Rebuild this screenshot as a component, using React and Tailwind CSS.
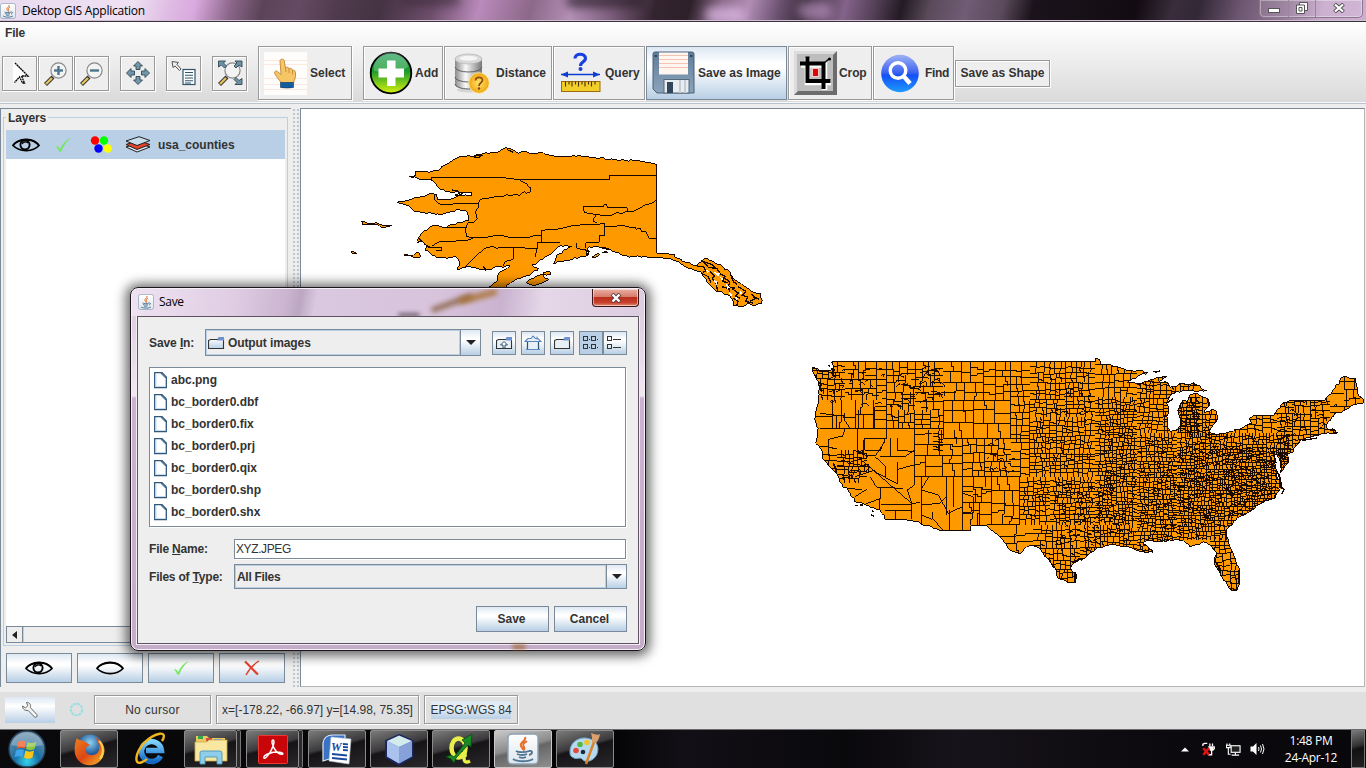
import React from "react";

/* ---------- map geometry (three map units per pixel) ---------- */

function makeRandom(seed) {
  let s = seed;
  return () => {
    s = (s * 1664525 + 1013904223) % 4294967296;
    return s / 4294967296;
  };
}

const snap = (v) => Math.round(v / 3) * 3 + 1.5;

// Turns a coarse outline into a ragged coast; axis-aligned borders stay straight.
function coast(text, seed, amp = 4) {
  const rand = makeRandom(seed);
  const pts = text.trim().split(/\s+/).map((p) => p.split(",").map(Number));
  let d = "";
  pts.forEach(([x, y], i) => {
    const [nx, ny] = pts[(i + 1) % pts.length];
    d += (i ? "L" : "M") + x + " " + y;
    const len = Math.hypot(nx - x, ny - y);
    if (nx !== x && ny !== y && len > 14) {
      const n = Math.floor(len / 8);
      for (let k = 1; k < n; k++) {
        const t = k / n;
        d += `L${(x + (nx - x) * t + (rand() - 0.5) * amp * 2).toFixed(1)} ${(y + (ny - y) * t + (rand() - 0.5) * amp * 2).toFixed(1)}`;
      }
    }
  });
  return d + "Z";
}

function subdivide(x, y, w, h, sizeAt, rand, out) {
  const s = sizeAt(x + w / 2, y + h / 2);
  if (w < s * 1.5 && h < s * 1.4) return;
  const r = 0.36 + rand() * 0.28;
  const jog = (rand() < 0.45 ? 3 : 0) * (rand() < 0.5 ? -1 : 1) * (s > 22 ? 2 : 1);
  if (w > h * 1.1) {
    const p = x + w * r;
    out.push(`M${snap(p)} ${snap(y)}V${snap(y + h / 2)}H${snap(p) + jog}V${snap(y + h)}`);
    subdivide(x, y, p - x, h, sizeAt, rand, out);
    subdivide(p, y, x + w - p, h, sizeAt, rand, out);
  } else {
    const p = y + h * r;
    out.push(`M${snap(x)} ${snap(p)}H${snap(x + w / 2)}V${snap(p) + jog}H${snap(x + w)}`);
    subdivide(x, y, w, p - y, sizeAt, rand, out);
    subdivide(x, p, w, y + h - p, sizeAt, rand, out);
  }
}

function countyLines() {
  const rand = makeRandom(77);
  const out = [];
  const box = (x1, y1, x2, y2, s) =>
    subdivide(x1, y1, x2 - x1, y2 - y1, typeof s === "function" ? s : () => s, rand, out);
  box(30, 35, 135, 150, 17);
  box(135, 35, 260, 150, 23);
  box(45, 150, 260, 235, 36);
  box(260, 35, 430, 180, 23);
  box(260, 180, 430, 235, 19);
  box(430, 35, 632, 152, 27);
  box(430, 152, 632, 265, 38);
  box(60, 270, 110, 380, 18);
  box(110, 300, 200, 400, 15);
  box(400, 235, 430, 310, 14);
  box(343, 240, 487, 380, 34);
  box(487, 265, 632, 380, 22);
  box(487, 380, 660, 525, 30);
  box(632, 35, 690, 380, 21);
  box(690, 35, 885, 200, 16.5);
  box(690, 200, 885, 380, 13.5);
  box(660, 380, 750, 525, 14);
  box(600, 525, 700, 620, 36);
  box(700, 525, 840, 700, 16);
  box(750, 380, 885, 525, 12.5);
  box(840, 525, 1010, 650, 13.5);
  box(885, 20, 1010, 140, 21);
  box(885, 140, 1010, 525, 11.5);
  box(1010, 60, 1200, 250, 14);
  box(1010, 250, 1130, 610, 11.5);
  box(1130, 140, 1290, 260, 14);
  box(1130, 250, 1470, 570, (x, y) => (y > 300 && y < 500 ? 10 : 11.5));
  box(1230, 560, 1330, 730, 16);
  box(1290, 190, 1430, 250, 18);
  box(1430, 140, 1590, 330, (x, y) => (y > 250 ? 13 : 17));
  box(1590, 70, 1700, 260, 30);
  // short diagonal ridges through the Appalachians and the mountain states
  const slants = [
    [1080, 290, 340, 250, 330, 7],
    [1260, 290, 160, 150, 70, 8],
    [890, 300, 250, 260, 150, 7],
    [80, 60, 170, 110, 26, 12],
    [280, 50, 150, 130, 34, 15],
    [110, 300, 90, 90, 12, 16],
    [550, 270, 80, 100, 14, 12],
    [760, 400, 140, 200, 90, 7],
    [760, 100, 110, 110, 20, 9],
    [1420, 160, 200, 120, 40, 10],
  ];
  slants.forEach(([x, y, w, h, n, l]) => {
    for (let i = 0; i < n; i++) {
      const a = x + rand() * w;
      const b = y + rand() * h;
      out.push(`M${a.toFixed(0)} ${b.toFixed(0)}l${(l * (0.5 + rand())).toFixed(0)} ${(l * (rand() - 0.75)).toFixed(0)}l${(l * (rand() - 0.3)).toFixed(0)} ${(l * rand()).toFixed(0)}`);
    }
  });
  return out.join("");
}

const COUNTIES = countyLines();

const USA = coast(
  `37,52 60,62 90,62 102,56 95,35 885,35 887,25 899,28 902,42 940,48 970,55 980,62 1045,67 1015,78 982,97
  1000,97 1025,100 1055,88 1080,83 1100,80 1078,95 1105,98 1110,112 1130,108 1140,100 1170,105 1180,98 1200,108
  1205,118 1220,122 1185,125 1150,122 1130,125 1108,140 1102,155 1104,180 1100,200 1105,235 1112,245 1130,240
  1142,225 1138,200 1133,180 1140,165 1150,150 1162,155 1170,135 1185,130 1205,140 1225,148 1230,165 1215,180
  1212,188 1235,178 1248,182 1253,205 1245,220 1230,240 1225,248 1255,253 1290,245 1325,235 1355,220 1348,205
  1360,198 1420,198 1432,178 1450,158 1470,151 1575,151 1605,115 1630,80 1648,85 1668,85 1672,130 1692,150
  1690,160 1670,162 1640,178 1605,190 1585,215 1580,235 1605,240 1610,250 1585,248 1550,256 1505,268 1490,285
  1480,305 1460,315 1466,330 1448,362 1440,370 1443,340 1430,318 1424,340 1428,375 1440,395 1444,415 1430,430
  1425,445 1400,450 1375,465 1340,490 1300,515 1280,540 1280,560 1295,600 1305,625 1320,660 1320,698 1312,721
  1292,721 1270,690 1255,660 1242,640 1250,610 1235,590 1210,575 1185,585 1170,590 1150,572 1125,568 1090,573
  1045,572 1030,580 1055,600 1060,607 1020,605 990,592 930,585 890,595 855,625 830,635 812,652 822,670 827,698 805,698
  775,685 765,655 735,620 720,595 700,587 680,590 658,612 625,595 610,570 580,545 562,528 512,528 512,542
  430,542 320,508 255,508 240,480 190,460 165,455 150,430 120,395 105,365 68,325 62,295 47,280 55,235 45,210
  55,150 58,115 50,90 37,65`,
  11,
  3.2
);

const ALASKA = coast(
  `208,110 228,106 225,95 260,95 295,93 315,75 348,55 385,47 400,50 430,40 470,38 498,23 520,30 535,40 555,35
  575,42 610,38 625,45 660,50 690,50 720,47 760,52 830,60 900,63 935,70 950,73 950,340 1003,342 1005,350
  1040,367 1065,378 1100,355 1130,372 1165,390 1185,420 1215,440 1235,455 1262,462 1265,490 1245,498 1225,490
  1210,500 1180,495 1175,475 1145,455 1130,455 1100,425 1082,395 1045,385 1015,365 990,355 950,353 860,348
  820,335 800,325 765,318 742,325 738,348 680,360 640,372 650,345 680,328 695,318 662,316 635,340 615,350
  595,365 575,375 595,385 575,400 540,415 515,425 490,445 435,450 470,425 475,400 510,378 480,380 440,390
  385,380 350,388 360,372 345,348 320,355 290,352 255,330 262,316 232,302 245,280 275,258 310,262 350,250
  385,242 382,215 350,208 310,222 225,215 210,200 172,187 200,180 250,170 275,160 290,165 292,178 330,178
  365,166 395,165 395,158 360,158 300,148 285,130 265,118 240,118`,
  5,
  3
);

const ALASKA_LINES =
  "M274 118H275V112H487L505 115L540 119H808V106H950M540 119L550 128L560 130L563 137L573 145L570 156L560 160L552 155L538 166L525 163L510 168L500 163L490 170L465 170L440 176L430 174L420 180L415 190L300 193L285 180L283 166M415 190L416 200L406 215L412 236L400 247L385 247L376 265L380 290L400 293L430 294L460 288L490 287L510 293L560 294L580 288L604 285M604 308V273L615 270H640L660 266L700 256L780 252L794 250V287H778V307H737M592 308H660M592 308V325L480 322L470 326L460 320L440 322L410 345L370 385M592 325L585 350M520 323V358L495 365L490 378M794 260L850 257L870 262L885 262L888 268L900 264L905 276L918 276L928 295H950M950 180L935 190L915 195L900 205L880 214L862 214M730 200L790 200L792 194L800 195L802 203L862 203L862 214L845 220L830 218L815 226L800 228L760 222L733 218L730 200M768 226L762 235L758 244L770 248M275 318L290 310L300 305L375 302L398 296M380 262H340L310 262M708 310L710 325L735 330M737 308V325";

const ALASKA_ISLES = [
  "65,243 88,252 108,248 130,256 155,256 128,264 112,252 85,253 68,254",
  "32,335 48,338 52,341 36,339",
  "192,345 220,346 234,337 244,348 228,354 212,347",
  "560,425 590,408 610,402 612,412 628,418 605,430 580,438 562,430",
  "608,398 628,394 634,402 618,406",
  "755,352 775,340 778,345 760,354",
  "785,338 800,334 802,339",
].map((t, i) => coast(t, 20 + i, 1.5));

const WEST_LINES =
  "M60 235H430M260 35V265M172 235V320L335 460M343 235V405M343 380H660M487 265V545M430 152V265M430 152H632M430 265H690M632 35V265M690 152V380M364 380V525M660 380V525H562M195 265H260M195 265V300L240 303L255 268M195 318H225L255 275M240 320H315L343 300M271 265V318M292 265V300L343 305M225 320L258 350V382M292 335V402M292 358L343 345M343 405L322 420L335 460L360 458M120 415L185 418M210 380L230 412L310 415M165 440L200 418M190 465L242 445V415M240 445V480M242 465H335V508M286 482V508M255 482H335M135 235L128 258L85 268M172 320L225 365L292 402M190 325V270M364 420L415 435L445 490L487 470M440 380V495M462 380V470M385 382L364 418M397 485V508L364 495M448 480V542M364 465L420 460L440 440M160 300L205 320M150 340L210 350M165 380L225 360M343 255L395 250M430 265V235M60 190L110 196V235M135 190V212L150 235M177 180V235M224 170V235M224 170H260M400 508L430 542M540 478V528M487 430L520 440V490H487";

function MapCanvas() {
  return (
    <svg width="1063" height="576" viewBox="301 109 1063 576" shapeRendering="crispEdges" className="block shrink-0">
      <defs>
        <clipPath id="land">
          <path d={USA} />
        </clipPath>
      </defs>
      <g transform="translate(340 140) scale(.33333)" stroke="#160800" strokeWidth="3" fill="#ff9900">
        <path d={ALASKA} />
        {ALASKA_ISLES.map((d, i) => (
          <path key={i} d={d} />
        ))}
        <path d={ALASKA_LINES} fill="none" />
        <path
          d="M400 50l10 -6 14 3 -8 6zM335 150l18 2 5 12 12 -4 M345 165l30 2 M235 295l8 6 -10 8M262 320l18 3 25 0 0 8 -18 0M430 378l8 14 M735 330l12 4 -5 14M780 322l26 6M500 28l20 10"
          fill="none"
          strokeWidth="4"
        />
        <path
          d="M1070 378l20 2 8 12 -10 6M1090 365l25 8 12 12 -22 -3zM1085 400l20 10 8 18M1110 395l14 12 -8 10 18 14M1130 385l12 18 14 6 -8 14 14 6M1128 430l6 26M1150 412l20 14 -6 14 22 5M1170 400l10 25 12 8M1145 440l22 6 3 15M1175 445l20 14 -8 10 14 6M1195 440l22 14 -10 12M1180 475l14 8 -4 14M1205 465l18 6 -6 14 22 4M1235 462l10 14 -14 8M1240 470l18 8"
          fill="none"
          strokeWidth="4"
        />
        <path d="M1122 396l18 4 -6 10zM1120 420l10 4 0 12zM1158 432l14 10 -10 4zM1165 455l14 10 -6 6zM1200 452l8 8 -8 3zM1210 475l-8 12zM1098 388l10 6 -6 6zM1140 412l10 3 -4 8zM1185 470l10 4 -6 6z" fill="#fff" stroke="none" />
      </g>
      <g transform="translate(800 350) scale(.33333)">
        <path d={USA} fill="#ff9900" />
        <g clipPath="url(#land)" fill="none" stroke="#1c0b00" strokeWidth="3">
          <path d={COUNTIES} />
          <path d={WEST_LINES} />
        </g>
        <path d={USA} fill="none" stroke="#160800" strokeWidth="3" />
        <path d="M165 467h10M180 465h8M215 482l6 4M214 494l8 5M1060 65h10M1066 68l14 -6M1098 160l22 -14M1505 272l45 -8M1596 236l8 14 8 -4M85 45l6 4M1424 318l4 20M1434 300l8 24M1438 405l14 14 -8 14" fill="none" stroke="#160800" strokeWidth="4" />
        <path d="M94 55l8 6 -6 8 8 12M55 98l8 4 -4 12 8 10M825 665l4 22M818 640l22 -14 8 4M100 340l10 25M1425 360l12 14 6 30M1150 370l12 4M1250 640l8 14 4 14" fill="none" stroke="#160800" strokeWidth="6" />
        <path d="M1428 312l8 14 -4 26 -5 8 3 -24 -5 -16zM1436 412l10 10 -8 12 -3 -6 5 -8z" fill="#fff" stroke="none" />
      </g>
    </svg>
  );
}

/* ---------- icons ---------- */

const JavaCup = ({ size }) => (
  <svg width={size} height={size} viewBox="0 0 32 32" className="shrink-0">
    <defs>
      <linearGradient id="jc" x1="0" y1="0" x2="0" y2="1">
        <stop offset="0" stopColor="#fff" />
        <stop offset="1" stopColor="#dfe6ec" />
      </linearGradient>
    </defs>
    <rect x="1" y="1" width="30" height="30" rx="4" fill="url(#jc)" stroke="#8aa0b2" strokeWidth="1.4" />
    <path d="M18 4c2 4-6 5-4 9 1 2 2 2 2 4M20 8c-3 2-5 3-3 6 1 2 0 3-1 3" fill="none" stroke="#e8702a" strokeWidth="2" />
    <path d="M9 18c2 1.500 10 1.500 13 0M10 21c3 1.300 8 1.300 10 0M12 24c2 1 5 1 7 0M22 18c4-1 4 3 0 4M6 26c4 3 16 3 20 0" fill="none" stroke="#4f7896" strokeWidth="1.900" />
  </svg>
);

const Eye = ({ open = true }) => (
  <svg width="28" height="16" viewBox="0 0 28 16">
    <path d="M1 8.500C6 2 20 0 27 8.500C21 15 8 15.500 1 8.500Z" fill="none" stroke="#000" strokeWidth="1.700" />
    <path d="M1 8C7 1 20-.5 27 8" fill="none" stroke="#000" strokeWidth="1.500" />
    {open && <circle cx="13" cy="7.800" r="4.600" fill="none" stroke="#000" strokeWidth="1.900" />}
    {open && <path d="M10 7c1-2 4-3 6-1" fill="none" stroke="#000" strokeWidth="1.300" />}
  </svg>
);

const Check = () => (
  <svg width="18" height="16" viewBox="0 0 18 16">
    <path d="M2 9.500C4 9 5 10 6 13C8 8 11 4 16 1.500C12 5 9 9 7 14.500L5.500 14.500C4.500 12 3.500 10.500 2 9.500Z" fill="#6bea4e" stroke="#6bea4e" strokeWidth=".3" />
  </svg>
);

const Cross = () => (
  <svg width="18" height="16" viewBox="0 0 18 16">
    <path d="M2 1.500C6 5 10 10 15 14.500" fill="none" stroke="#e2412b" strokeWidth="2.200" />
    <path d="M16 1C11 4 6 9 3 15" fill="none" stroke="#e2412b" strokeWidth="1.400" />
  </svg>
);

const Dots = () => (
  <svg width="22" height="18" viewBox="0 0 22 18">
    <circle cx="5" cy="4.500" r="4.200" fill="#f00" />
    <circle cx="14" cy="4.500" r="4.200" fill="#0f0" />
    <circle cx="8.500" cy="12.500" r="4.200" fill="#00f" />
    <circle cx="17.700" cy="12.500" r="4.200" fill="#ff0" />
  </svg>
);

const Stack = () => (
  <svg width="26" height="17" viewBox="0 0 26 17">
    <g stroke="#222" strokeWidth="1" strokeLinejoin="round">
      <path d="M1 11L13 7L25 11L12 16Z" fill="#dfeaf4" />
      <path d="M1 8.500L13 4.500L25 8.500L12 13.500Z" fill="#e0432c" />
      <path d="M1 5L14 .7L25 4.500L12 9.500Z" fill="#c9dcec" />
    </g>
  </svg>
);

const Magnifier = ({ minus, arrows }) => (
  <svg width="30" height="30" viewBox="0 0 30 30">
    <path d="M4.500 26.500L12 19" stroke="#333" strokeWidth="4.200" />
    <path d="M5 26L11 20" stroke="#e4c15a" strokeWidth="2.400" />
    <circle cx="17.500" cy="12.500" r="7.600" fill="#f3f3f3" stroke="#888" strokeWidth="1.200" />
    {!arrows && <path d="M13 12.500H22" stroke="#4d7489" strokeWidth="2.400" />}
    {!arrows && !minus && <path d="M17.500 8V17" stroke="#4d7489" strokeWidth="2.400" />}
    {arrows && (
      <g fill="#6f93a5" stroke="#2f4756" strokeWidth=".9">
        <path d="M3.500 3h7l-2 2 3 3-2 2-3-3-3 2z" />
        <path d="M27 3h-7l2 2-3 3 2 2 3-3 3 2z" />
        <path d="M27 26.500h-7l2-2-3-3 2-2 3 3 3-2z" />
      </g>
    )}
  </svg>
);

const Pointer = () => (
  <svg width="30" height="30" viewBox="0 0 30 30">
    <path d="M8 4V24H9L13 19L16 25L19 24L17 18L23 18Z" fill="#fff" />
    <path d="M10 5L23 18H16.500L19.500 25L17.500 25L14.500 19L9.500 24.500" fill="none" stroke="#000" strokeWidth="1.300" strokeDasharray="2 .5" />
  </svg>
);

const Pan = () => (
  <svg width="30" height="30" viewBox="0 0 30 30" fill="#7397a9" stroke="#2f4756" strokeWidth=".9">
    <path d="M15 3.500l4.500 4.500H17v3.500h-4V8h-2.500zM15 26.500l4.500-4.500H17v-3.500h-4V22h-2.500zM3.500 15L8 10.500V13h3.500v4H8v2.500zM26.500 15L22 10.500V13h-3.500v4H22v2.500z" />
  </svg>
);

const Info = () => (
  <svg width="30" height="30" viewBox="0 0 30 30">
    <path d="M3 3.500L9.500 4.500L7.800 6.200L12 11L10.500 12.500L6 8L4 9.500Z" fill="#eee" stroke="#555" />
    <rect x="14" y="11.500" width="12" height="15" fill="#fff" stroke="#31556c" strokeWidth="1.200" />
    <path d="M16 14.500h8M16 17.300h8M16 20h8M16 22.700h8M16 25h6" stroke="#31556c" strokeWidth="1.100" />
  </svg>
);

const Hand = () => (
  <svg width="43" height="43" viewBox="0 0 43 43">
    <path d="M0 0H43V43H0Z" fill="#fffdfb" />
    <path d="M0 8.500H43M0 12.500H43M0 26.500H43M0 32.500H43M0 37.500H43" stroke="#fbe9e0" />
    <path d="M16 9C16 6.500 20 6.500 20.300 9L21.500 16C22 14.500 25 15 25 17C26 15.500 28.500 16.500 28.500 18.500C30 17.500 31.500 19 31.500 21C32 26 30.500 27 29.500 31H17C16 28 13 26 11 22C9.500 19.500 12 18 14 20L17 22.500Z" fill="#f6c566" stroke="#b97b25" strokeWidth=".8" />
    <path d="M21.500 16l.5 4M25 17v4M28.500 18.500v4" stroke="#b97b25" strokeWidth=".7" />
    <path d="M16.500 30.500H29.500V35.500Q23 36.500 16.500 35.500Z" fill="#145c9c" stroke="#0b3766" strokeWidth=".6" />
  </svg>
);

const Plus = () => (
  <svg width="44" height="44" viewBox="0 0 44 44">
    <defs>
      <linearGradient id="pg" x1="0" y1="0" x2="0" y2="1">
        <stop offset="0" stopColor="#37a66b" />
        <stop offset=".45" stopColor="#199a2c" />
        <stop offset="1" stopColor="#d8f20c" />
      </linearGradient>
    </defs>
    <circle cx="22" cy="22" r="20.300" fill="url(#pg)" stroke="#000" strokeWidth="1.800" />
    <path d="M5 20A17 17 0 0 1 39 16Q28 24 5 20Z" fill="#fff" opacity=".22" />
    <path d="M18 9.500h8.500v8H35v9h-8.500v8.500H18V26.500H9.500v-9H18z" fill="#fff" />
  </svg>
);

const Database = () => (
  <svg width="44" height="44" viewBox="0 0 44 44">
    <defs>
      <linearGradient id="dg" x1="0" x2="1">
        <stop offset="0" stopColor="#8a8a8a" />
        <stop offset=".4" stopColor="#fafafa" />
        <stop offset="1" stopColor="#777" />
      </linearGradient>
      <radialGradient id="qg">
        <stop offset="0" stopColor="#ffe36a" />
        <stop offset="1" stopColor="#f0a612" />
      </radialGradient>
    </defs>
    <ellipse cx="20" cy="39" rx="13" ry="2.500" fill="#bbb" opacity=".5" />
    {[28, 21, 11].map((y) => (
      <g key={y}>
        <path d={`M5 ${y - 3}V${y + 5}A13.500 5 0 0 0 32 ${y + 5}V${y - 3}Z`} fill="url(#dg)" />
        <path d={`M5 ${y + 5}A13.500 5 0 0 0 32 ${y + 5}`} fill="none" stroke="#555" strokeWidth=".9" />
      </g>
    ))}
    <ellipse cx="18.500" cy="8" rx="13.500" ry="5" fill="#d9d9d9" stroke="#aaa" strokeWidth=".6" />
    <ellipse cx="18.500" cy="7.300" rx="9" ry="2.500" fill="#f5f5f5" />
    <circle cx="29" cy="32" r="10.300" fill="url(#qg)" stroke="#fff0a8" strokeWidth=".8" />
    <path d="M25.500 29.500C25.500 25.500 32.500 25.500 32.500 29C32.500 32 29 31.500 29 35" fill="none" stroke="#8b4a10" strokeWidth="1.700" />
    <circle cx="29" cy="37.500" r="1.200" fill="#8b4a10" />
  </svg>
);

const Ruler = () => (
  <svg width="44" height="44" viewBox="0 0 44 44">
    <path d="M16 7.500C16 1.800 26.500 1.800 26.500 7.500C26.500 11 21.500 10.500 21.500 15" fill="none" stroke="#1a3fe0" strokeWidth="3.200" />
    <circle cx="21.500" cy="18" r="2" fill="#1a3fe0" />
    <path d="M2 23.500H41" stroke="#0e3fd0" strokeWidth="1.500" />
    <path d="M2 23.500l7-3v6zM41 23.500l-7-3v6z" fill="#0e3fd0" />
    <rect x="2.500" y="30.500" width="38.500" height="10" fill="#f2ce2b" stroke="#a06a10" />
    <path d="M6.500 30.500v5M10 30.500v3M13 30.500v5M16.500 30.500v3M19.500 30.500v5M23 30.500v3M26 30.500v5M29.500 30.500v3M32.500 30.500v5M36 30.500v3" stroke="#4b3406" strokeWidth="1.100" />
  </svg>
);

const Floppy = () => (
  <svg width="44" height="44" viewBox="0 0 44 44">
    <defs>
      <linearGradient id="fg" x1="0" y1="0" x2="0" y2="1">
        <stop offset="0" stopColor="#5f7c9a" />
        <stop offset="1" stopColor="#8ba4ba" />
      </linearGradient>
    </defs>
    <path d="M1 3Q1 1 3 1H40Q42 1 42 3V42H5L1 38Z" fill="url(#fg)" stroke="#4a6078" />
    <rect x="7" y="1.500" width="29" height="22" fill="#fff6f2" />
    <path d="M7 4.500H36M7 8.500H36M7 12.500H36M7 16.500H36" stroke="#f4c3b4" strokeWidth="1.200" />
    <path d="M2.500 5h2.500M38 5h2.500" stroke="#243444" strokeWidth="1.600" />
    <rect x="12" y="28.500" width="25" height="13.500" fill="#e9edf0" stroke="#54687c" />
    <rect x="15" y="31" width="6" height="11" fill="#34475a" />
    <path d="M28 29v13M33 29v13" stroke="#c3ccd4" strokeWidth="2" />
  </svg>
);

const Crop = () => (
  <svg width="43" height="44" viewBox="0 0 43 44">
    <rect width="43" height="44" fill="#dcdcdc" />
    <path d="M0 44H43V0L39 4V40H4Z" fill="#6d6d6d" />
    <rect x="3" y="3" width="36" height="37" fill="#bdbdbd" />
    <path d="M13.500 7V31.500H37M7 14H30.500V39" fill="none" stroke="#fff" strokeWidth="5.500" />
    <path d="M13.500 5.500V30H36.500M6 12.500H29.500V38" fill="none" stroke="#000" strokeWidth="4" />
    <path d="M30 12L35.500 7.500" stroke="#000" strokeWidth="1.200" />
    <circle cx="35.500" cy="8" r="1.600" />
    <rect x="17.500" y="17" width="7.500" height="9" fill="#f4caca" />
    <rect x="19" y="18" width="5" height="7" fill="#d80808" />
  </svg>
);

const Find = () => (
  <svg width="40" height="44" viewBox="0 0 40 44">
    <defs>
      <linearGradient id="sg" x1="0" y1="0" x2="0" y2="1">
        <stop offset="0" stopColor="#9fb2f5" />
        <stop offset=".48" stopColor="#3a62f0" />
        <stop offset=".55" stopColor="#1450f5" />
        <stop offset="1" stopColor="#1e9bff" />
      </linearGradient>
    </defs>
    <circle cx="20" cy="22.500" r="18.800" fill="url(#sg)" />
    <circle cx="18" cy="19.500" r="7.800" fill="none" stroke="#fff" strokeWidth="3.400" />
    <path d="M23.500 25L30 32.500" stroke="#fff" strokeWidth="4.400" />
  </svg>
);

const Wrench = () => (
  <svg width="18" height="18" viewBox="0 0 18 18">
    <path d="M5.500 1.500C8 1 10.500 3.500 9.300 6.500L15.800 13.500C17 15.500 15 17 13.500 16L7 9.300C4 10 1.500 8 1.500 5L4.500 6.800L6.800 4.800Z" fill="#f4f4f4" stroke="#666" />
  </svg>
);

const FolderIcon = ({ fill = "url(#fold)", children }) => (
  <svg width="17" height="14" viewBox="0 0 17 14">
    <defs>
      <linearGradient id="fold" x1="0" y1="0" x2="0" y2="1">
        <stop offset="0" stopColor="#fff" />
        <stop offset="1" stopColor="#b8cfe5" />
      </linearGradient>
    </defs>
    <path d="M.5 12.500V4.500L2.500 3.500H9.500L11.500 2.500H15.500V12.500Z" fill={fill} stroke="#333" strokeWidth="1.100" />
    <path d="M10.500 1H16V4.500H9.500Z" fill="#6f8fd0" />
    {children}
  </svg>
);

const PageIcon = () => (
  <svg width="13" height="17" viewBox="0 0 13 17">
    <path d="M.7.700H8L12.300 5V15.700H.7Z" fill="#fff" stroke="#30567a" strokeWidth="1.300" />
    <path d="M2 2v12.500h9" fill="none" stroke="#c8dced" />
    <path d="M7 1.500L11.500 6V4.500L8.500 1.500Z" fill="#6c93b5" stroke="#30567a" strokeWidth=".7" />
  </svg>
);

const House = () => (
  <svg width="18" height="16" viewBox="0 0 18 16">
    <path d="M3.500 6.500V14.500H14.500V6.500" fill="#e8eff6" stroke="#31506b" strokeWidth="1.200" />
    <path d="M1 6.500L4 3.500H7L9 1L11.500 3.500H14L17 6.500Z" fill="#e8eff6" stroke="#5687c0" strokeWidth="1.100" />
    <path d="M13 1.500v3" stroke="#5687c0" />
    <path d="M2 14.500h14" stroke="#5687c0" />
  </svg>
);

const GridIcon = () => (
  <svg width="16" height="16" viewBox="0 0 16 16" fill="none" stroke="#333" shapeRendering="crispEdges">
    <path d="M.5 1.500h4v4h-4zM8.500 1.500h4v4h-4zM.5 9.500h4v4h-4zM8.500 9.500h4v4h-4zM6 4.500h1M14 4.500h1M6 12.500h1M14 12.500h1" />
  </svg>
);

const ListIcon = () => (
  <svg width="16" height="16" viewBox="0 0 16 16" fill="none" stroke="#333" shapeRendering="crispEdges">
    <path d="M.5 1.500h4v4h-4zM.5 9.500h4v4h-4zM6 4.500h8M6 12.500h8" />
  </svg>
);

/* ---------- shared widgets ---------- */

function ToolButton({ className, children }) {
  return (
    <div className={"shrink-0 border-r border-b border-white " + className}>
      <div className="flex h-full w-full items-center border border-[#999] bg-[#eee] shadow-[inset_1px_1px_0_#fff]">{children}</div>
    </div>
  );
}

const OCEAN = "border border-[#7a8a99] bg-[linear-gradient(#dde8f3,#fff_32%,#fff_40%,#b8cfe5)]";

function Arrow() {
  return (
    <div className={"flex w-5 items-center justify-center border-y-0 border-r-0 " + OCEAN}>
      <svg width="10" height="5" viewBox="0 0 10 5">
        <path d="M0 0H10L5 5Z" fill="#222" />
      </svg>
    </div>
  );
}

/* ---------- dialog ---------- */

const FILES = ["abc.png", "bc_border0.dbf", "bc_border0.fix", "bc_border0.prj", "bc_border0.qix", "bc_border0.shp", "bc_border0.shx"];

function SaveDialog() {
  return (
    <div className="absolute top-[287px] left-[130px] flex h-[364px] w-[516px] flex-col rounded-[8px] border border-[#1d151d] bg-[linear-gradient(#d8c5db,#f0e8f1_108px,#cbb2d0_110px,#c5adca)] p-px shadow-[0_1px_12px_4px_rgba(0,0,0,.6),inset_0_0_0_1px_#f6eef7]">
      <div className="relative flex h-[27px] shrink-0 items-start justify-between overflow-hidden rounded-t-[6px] bg-[linear-gradient(100deg,#eee2f1,#e0cde4_20%,#cbb5d0_30%,#bca7c2_33%,#d9c8df_36%,#d8c3dc_60%,#c9b3cf_72%,#e5d7e8_80%,#dccde0)]">
        <div className="absolute top-[11px] left-[298px] h-[6px] w-[44px] -rotate-[20deg] rounded-full bg-[#84603f] opacity-80 blur-[2.500px]" />
        <div className="absolute top-[4px] left-[326px] h-[7px] w-[40px] -rotate-[15deg] rounded-full bg-[#a9702f] opacity-80 blur-[2.500px]" />
        <div className="absolute top-[24px] left-[266px] h-[4px] w-[22px] rounded-full bg-[#46353f] opacity-70 blur-[2px]" />
        <div className="relative flex items-center gap-[5px] pt-[5px] pl-[6px]">
          <JavaCup size={16} />
          <span className="font-['Open_Sans',sans-serif] text-[12px] leading-4 tracking-[-0.3px] text-black">Save</span>
        </div>
        <div className="relative mr-[5px] flex h-[18px] w-[47px] items-center justify-center rounded-b-[4px] border border-t-0 border-[#3d1717] bg-[linear-gradient(#eab0a3,#d6796a_48%,#b92f1c_50%,#c8402c_80%,#e58d72)] shadow-[inset_0_0_0_1px_rgba(255,255,255,.5)]">
          <svg width="12" height="10" viewBox="0 0 12 10">
            <path d="M2 1L10 9M10 1L2 9" stroke="#5a3a3a" strokeWidth="4" />
            <path d="M2.500 1.500L9.500 8.500M9.500 1.500L2.500 8.500" stroke="#fff" strokeWidth="2.400" />
          </svg>
        </div>
      </div>
      <div className="mx-[5px] flex h-[328px] flex-col border border-[#5d5361] bg-[#eee] pr-[11px] pl-[11px] font-['Liberation_Sans',sans-serif] text-[12px] font-bold text-[#333] shadow-[0_0_0_1px_#f4ecf6]">
        <div className="mt-[12px] flex h-[27px] items-center">
          <span className="w-[56px] tracking-[-0.1px]">Save <u>I</u>n:</span>
          <div className="flex h-[27px] w-[276px] border border-[#7a8a99] bg-[#eee]">
            <div className="flex flex-1 items-center gap-[3px] border border-[#b8cfe5] pl-px">
              <FolderIcon />
              <span className="tracking-[-0.1px]">Output images</span>
            </div>
            <Arrow />
          </div>
          <div className="ml-[11px] flex">
            <div className={"mr-[5px] flex size-6 items-center justify-center " + OCEAN}>
              <FolderIcon fill="#e8eff6">
                <path d="M4.500 9L8 5.500L11.500 9H9V12H7V9Z" fill="#fff" stroke="#31506b" />
              </FolderIcon>
            </div>
            <div className={"mr-[5px] flex size-6 items-center justify-center " + OCEAN}><House /></div>
            <div className={"mr-[5px] flex size-6 items-center justify-center " + OCEAN}><FolderIcon fill="#e8eff6" /></div>
            <div className="flex size-6 items-center justify-center border border-[#7a8a99] bg-[#b8cfe5]"><GridIcon /></div>
            <div className={"flex size-6 items-center justify-center " + OCEAN}><ListIcon /></div>
          </div>
        </div>
        <div className="mt-[11px] h-[160px] w-[477px] border border-[#7a8a99] bg-white pt-px pl-[4px] shadow-[1px_1px_0_#fff]">
          {FILES.map((f) => (
            <div key={f} className="flex h-[22px] items-center gap-[4px]">
              <PageIcon />
              <span>{f}</span>
            </div>
          ))}
        </div>
        <div className="mt-[12px] flex h-5 items-center">
          <span className="w-[85px] tracking-[-0.2px]">File <u>N</u>ame:</span>
          <div className="flex h-5 w-[392px] items-center border border-[#7a8a99] bg-white pl-px font-normal tracking-[-0.4px] shadow-[1px_1px_0_#fff]">XYZ.JPEG</div>
        </div>
        <div className="mt-[5px] flex h-[25px] items-center">
          <span className="w-[85px] tracking-[-0.2px]">Files of <u>T</u>ype:</span>
          <div className="flex h-[25px] w-[393px] border border-[#7a8a99] bg-[#eee]">
            <div className="flex flex-1 items-center border border-[#b8cfe5] pl-px tracking-[-0.3px]">All Files</div>
            <Arrow />
          </div>
        </div>
        <div className="mt-[17px] flex justify-end gap-[5px]">
          <div className={"flex h-[26px] w-[73px] items-center justify-center pr-[2px] " + OCEAN}>Save</div>
          <div className={"flex h-[26px] w-[73px] items-center justify-center pr-[2px] " + OCEAN}>Cancel</div>
        </div>
      </div>
      <div className="absolute bottom-px left-[381px] h-[4px] w-[14px] rounded-full bg-[#a06a38] blur-[2px]" />
    </div>
  );
}

/* ---------- taskbar ---------- */

function Task({ className = "", active, children }) {
  return (
    <div
      className={
        "flex h-[38px] shrink-0 items-center justify-center rounded-[2px] border " +
        (active
          ? "border-[#c9c9c9] bg-[linear-gradient(165deg,#c9c9c9,#8b8b8b_45%,#666_52%,#8f8f8f)] "
          : "border-[#8a8a8a] bg-[linear-gradient(165deg,#7b7b7b,#3c3a3c_42%,#161417_48%,#29272a)] ") +
        className
      }
    >
      {children}
    </div>
  );
}

const StartOrb = () => (
  <svg width="38" height="38" viewBox="0 0 38 38">
    <defs>
      <radialGradient id="ob" cx=".5" cy=".85" r=".85">
        <stop offset="0" stopColor="#35d4ec" />
        <stop offset=".4" stopColor="#1a6fa5" />
        <stop offset="1" stopColor="#7a94a8" />
      </radialGradient>
    </defs>
    <circle cx="19" cy="19" r="18" fill="url(#ob)" stroke="#27435a" strokeWidth="1.400" />
    <path d="M10 12C13 10 15 10.500 18 11.500L16.500 18.500C14 17.500 11 17.500 8.500 19Z" fill="#ee5a24" />
    <path d="M19.500 12C22 13.500 25 13.500 28.500 11.500L26.500 19C24 20.500 21 20.500 18 19Z" fill="#8cc63f" />
    <path d="M8 20.500C11 19 13.500 19 16 20L14.500 27C12 26 9 26 6.500 27.500Z" fill="#3fa4ea" />
    <path d="M17.500 20.500C20 22 23 22 26 20.500L24.500 27.500C21 29.500 18.500 29 16 27.500Z" fill="#fcc419" />
    <path d="M3 15A16.500 16.500 0 0 1 35 15Q19 19 3 15Z" fill="#fff" opacity=".25" />
  </svg>
);

const Firefox = () => (
  <svg width="33" height="33" viewBox="0 0 33 33">
    <defs>
      <radialGradient id="ffb" cx=".5" cy=".3">
        <stop offset="0" stopColor="#8ed3f4" />
        <stop offset="1" stopColor="#10478e" />
      </radialGradient>
      <linearGradient id="ffo" x1="0" y1="0" x2="1" y2="1">
        <stop offset="0" stopColor="#f08220" />
        <stop offset=".5" stopColor="#dc4714" />
        <stop offset="1" stopColor="#f9c02d" />
      </linearGradient>
    </defs>
    <circle cx="17" cy="15" r="13.500" fill="url(#ffb)" />
    <path d="M4 5C6 8 9 7 11 8C14 9 14 11 17 12C14 14 11 15 13 19C16 24 24 23 26 17C27 13 25 8 22 4C30 8 33 15 31 21C27 36 6 36 2 21C1 16 2 9 4 5Z" fill="url(#ffo)" />
    <path d="M26 8C31 13 31 21 27 26" fill="none" stroke="#fbd44d" strokeWidth="2" />
  </svg>
);

const Explorer = () => (
  <svg width="36" height="34" viewBox="0 0 36 34">
    <defs>
      <linearGradient id="ieg" x1="0" y1="0" x2="0" y2="1">
        <stop offset="0" stopColor="#7fd4ff" />
        <stop offset="1" stopColor="#1268c4" />
      </linearGradient>
    </defs>
    <path d="M27.500 24A10 10 0 1 1 28.500 18.500H13" fill="none" stroke="url(#ieg)" strokeWidth="5.500" />
    <path d="M29 9C36-2 22 0 11 11C2 21 1 33 8 30.500C10 30 12 29 14 27" fill="none" stroke="#f3b51f" strokeWidth="2.400" />
  </svg>
);

const Folders = () => (
  <svg width="34" height="32" viewBox="0 0 34 32">
    <path d="M2 8V3H13L15 5H31V28H2Z" fill="#e9c863" />
    <path d="M4 3h5v3H4z" fill="#2fa84c" />
    <path d="M12 5h6v3h-6z" fill="#d34c3a" />
    <path d="M20 6h8v3h-8z" fill="#58a5dd" />
    <path d="M1 9H13L15 7H33V28H1Z" fill="#f8e7a0" stroke="#cfa94a" strokeWidth=".8" />
    <path d="M6 31V20Q6 18 8 18H26Q28 18 28 20V31H23V24H11V31Z" fill="#8fcdea" stroke="#4d97bd" strokeWidth=".9" />
  </svg>
);

const Pdf = () => (
  <svg width="30" height="29" viewBox="0 0 30 29">
    <rect x=".5" y=".5" width="29" height="28" rx="1" fill="#c8060a" stroke="#ee3a35" />
    <path d="M6 23C4 20 16 16 23 17.500C28 19 22 21 18 16C14 11 13 5 15 5C17.500 5 15 15 9 21.500C7.500 23 6.500 23.800 6 23Z" fill="none" stroke="#fff" strokeWidth="1.500" />
  </svg>
);

const Word = () => (
  <svg width="32" height="31" viewBox="0 0 32 31">
    <path d="M2 9Q3 1 12 1H24V20L2 27Z" fill="#3974c4" stroke="#d9e7f8" strokeWidth="1.200" />
    <path d="M10 3L30 5L28 30L8 27Z" fill="#fff" stroke="#b9c6d8" strokeWidth=".6" />
    <text x="10" y="17" fontFamily="Liberation Serif, serif" fontSize="12" fontWeight="bold" fontStyle="italic" fill="#1b4a9c">W</text>
    <path d="M22 10l5 .4M22 13l5 .4M22 16l5 .4M11 20l15 1.500M11 24l15 1.500" stroke="#1b4a9c" strokeWidth="1.800" />
  </svg>
);

const Cube = () => (
  <svg width="31" height="33" viewBox="0 0 31 33">
    <path d="M15 2L28.500 8V24L15 31.500L2 24V8Z" fill="#5a78c8" stroke="#1b2560" strokeWidth="2" />
    <path d="M15 2.500L28 8L15 14L3 8Z" fill="#d3eceb" />
    <path d="M3 8L15 14V30.500L3 23.500Z" fill="#a9c3ee" />
    <path d="M28 8L15 14V30.500L28 23.500Z" fill="#86a2d8" />
  </svg>
);

const Qgis = () => (
  <svg width="32" height="33" viewBox="0 0 32 33">
    <ellipse cx="13.500" cy="15" rx="7" ry="9.500" fill="none" stroke="#e8ee4a" strokeWidth="4.500" />
    <path d="M13 21Q19 19 19 25Q19 31 25 28" fill="none" stroke="#e8ee4a" strokeWidth="3.500" />
    <path d="M20 6V24" stroke="#e8ee4a" strokeWidth="3.500" />
    <path d="M1 24L6 22L9 24L20 10L17 7L27 1L26 14L23 12L11 25L9 30L6 26Z" fill="#198a26" stroke="#07480f" strokeWidth=".8" />
  </svg>
);

const Paint = () => (
  <svg width="34" height="34" viewBox="0 0 34 34">
    <path d="M2 21C1 12 9 5 18 6C28 7 32 14 29 22C26 29 18 31 15 28C12 24 9 28 6 26C3 25 2 23 2 21Z" fill="#b7d9ee" stroke="#6ea0c2" />
    <circle cx="8" cy="18.500" r="2.800" fill="#e34a3a" />
    <circle cx="12" cy="12.500" r="2.800" fill="#52b948" />
    <circle cx="19" cy="10.500" r="2.800" fill="#efc32e" />
    <circle cx="15" cy="20" r="2.300" fill="#1b2b3d" />
    <path d="M18 32L26 10" stroke="#d9822a" strokeWidth="2.500" />
    <path d="M24 10Q24 3 23 1Q30 4 32 2Q31 8 28 11Z" fill="#d7a06c" />
  </svg>
);

function Taskbar() {
  return (
    <div className="flex h-[39px] shrink-0 items-start border-t border-[#6d6a6d] bg-[linear-gradient(90deg,#0a090b_0,#050405_45%,#121016_50%,#09080b_62%,#17131a_70%,#0b090d_86%,#08070a)] text-white">
      <div className="ml-[8px] flex w-[52px] shrink-0"><StartOrb /></div>
      <Task className="w-[58px]"><Firefox /></Task>
      <div className="flex h-[38px] w-[66px] items-center justify-center"><Explorer /></div>
      <Task className="w-[53px]"><Folders /></Task>
      <div className="mr-[5px] h-[38px] w-[4px] rounded-r-[2px] border-y border-r border-[#777] bg-[#2b2b2b]" />
      <Task className="w-[53px]"><Pdf /></Task>
      <div className="mr-[5px] h-[38px] w-[4px] rounded-r-[2px] border-y border-r border-[#777] bg-[#2b2b2b]" />
      <Task className="mr-[4px] w-[58px]"><Word /></Task>
      <Task className="mr-[4px] w-[58px]"><Cube /></Task>
      <Task className="mr-[4px] w-[58px]"><Qgis /></Task>
      <Task active className="mr-[4px] w-[58px]"><JavaCup size={32} /></Task>
      <Task className="w-[58px]"><Paint /></Task>
      <div className="ml-auto flex h-[38px] items-center">
        <svg width="8" height="5" viewBox="0 0 8 5"><path d="M0 4.500L4 .5L8 4.500Z" fill="#fff" /></svg>
        <svg className="ml-[13px]" width="14" height="15" viewBox="0 0 16 16">
          <path d="M1 4V2L3 1H6M9 1V4M12 1V4M7 5H14V7Q13 9 11 9V14H7" fill="none" stroke="#fff" strokeWidth="1.500" />
          <path d="M8 5h5v3l-2 1.500h-2z" fill="#fff" />
          <path d="M1.500 6.500L8 14M8 6.500L1.500 14" stroke="#e81212" strokeWidth="2.800" />
        </svg>
        <svg className="ml-[10px]" width="15" height="15" viewBox="0 0 16 15">
          <rect x="5.500" y="3.500" width="9.500" height="7" fill="#222" stroke="#fff" strokeWidth="1.200" />
          <path d="M6 13.500H14M10 11V13M2.500 6V12.500H5M1 1V3M4 1V3M.5 3H4.500V5.500H.5Z" fill="none" stroke="#fff" strokeWidth="1.200" />
        </svg>
        <svg className="ml-[9px]" width="15" height="14" viewBox="0 0 15 14">
          <path d="M.5 4.500H3L6.500 1V13L3 9.500H.5Z" fill="#fff" />
          <path d="M8.500 5Q9.500 7 8.500 9M10.500 3.500Q12.500 7 10.500 10.500M12.500 2Q15.500 7 12.500 12" fill="none" stroke="#fff" />
        </svg>
        <div className="mr-[7px] ml-[13px] w-[66px] text-center font-['Open_Sans',sans-serif] text-[12px] leading-[17px] tracking-[-0.3px] whitespace-nowrap">
          <div>1:48 PM</div>
          <div>24-Apr-12</div>
        </div>
      </div>
      <div className="mr-px h-[38px] w-[14px] shrink-0 border border-[#777] bg-[linear-gradient(165deg,#777,#333_40%,#111_50%,#222)]" />
    </div>
  );
}

/* ---------- window ---------- */

function TitleBar() {
  return (
    <div className="relative flex h-[22px] shrink-0 items-start justify-between overflow-hidden border-b border-[#3c2f3e] bg-[linear-gradient(105deg,#eadcf0_0,#eedff2_130px,#dfbce4_165px,#d9a9de_190px,#8b6689_225px,#5b4459_255px,#654a63_290px,#4e3a4c_330px,#443343_370px,#6e4d6b_420px,#b98abb_465px,#8c6889_515px,#b48fb7_555px,#7d5e7c_595px,#33242f_635px,#2d2029_668px,#8a6a8b_698px,#b18db5_725px,#6b5170_755px,#3b2c3c_780px,#84638a_818px,#57425a_845px,#231a23_873px,#5a4a5a_900px,#705c75_935px,#5b4a5c_970px,#1a131b_1000px,#120c12_1100px,#3a2c3c_1135px,#332836_1160px,#6c5670_1200px,#957a98_1245px,#c6a7ca_1280px,#d3b5d8_1366px)] shadow-[inset_0_-1px_0_#cfc3d1]">
      <div className="absolute top-[7px] left-[705px] h-[16px] w-[40px] rounded-full bg-[#e2bde8] opacity-70 blur-[5px]" />
      <div className="absolute top-[2px] left-[798px] h-[18px] w-[34px] rounded-full bg-[#c39cc9] opacity-60 blur-[5px]" />
      <div className="absolute -top-[6px] left-[566px] h-[14px] w-[80px] rounded-full bg-[#2a1d29] opacity-70 blur-[5px]" />
      <div className="absolute -top-[6px] left-[400px] h-[12px] w-[60px] rounded-full bg-[#3a2a39] opacity-60 blur-[5px]" />
      <div className="relative flex items-center gap-[6px] pt-[3px]">
        <JavaCup size={16} />
        <span className="font-['Open_Sans',sans-serif] text-[12px] leading-4 tracking-[-0.24px] whitespace-nowrap text-black">Dektop GIS Application</span>
      </div>
      <div className="relative mr-[3px] flex h-[18px] w-[104px] rounded-b-[5px] border border-t-0 border-[#8b7590] bg-white/10 shadow-[inset_0_0_0_1px_rgba(255,255,255,.35)]">
        <div className="flex w-[29px] items-center justify-center border-r border-[#9d84a2] pt-[3px]">
          <svg width="12" height="5" viewBox="0 0 12 5"><rect x=".5" y=".5" width="11" height="4" fill="#fff" stroke="#555" /></svg>
        </div>
        <div className="flex w-[27px] items-center justify-center border-r border-[#9d84a2] pb-px">
          <svg width="12" height="12" viewBox="0 0 12 12" fill="#fff" stroke="#555">
            <path d="M3.500 .5h8v8h-8z" />
            <path d="M.5 3h8v8.500h-8z" />
            <path d="M3 5.500h3v3.500H3z" />
          </svg>
        </div>
        <div className="flex flex-1 items-center justify-center pb-[2px]">
          <svg width="12" height="10" viewBox="0 0 12 10">
            <path d="M1.500 1L10.500 9M10.500 1L1.500 9" stroke="#555" strokeWidth="4" />
            <path d="M2 1.500L10 8.500M10 1.500L2 8.500" stroke="#fff" strokeWidth="2.200" />
          </svg>
        </div>
      </div>
    </div>
  );
}

function Toolbar() {
  return (
    <div className="flex h-[80px] shrink-0 flex-col bg-[linear-gradient(#fff,#dadada)] text-[12px] font-bold">
      <div className="h-[24px] pt-[3px] pl-[5px] leading-4 tracking-[-0.2px]">File</div>
      <div className="flex h-[55px] items-center pl-[2px]">
        <ToolButton className="size-9 *:justify-center"><Pointer /></ToolButton>
        <ToolButton className="size-9 *:justify-center"><Magnifier /></ToolButton>
        <ToolButton className="mr-[10px] size-9 *:justify-center"><Magnifier minus /></ToolButton>
        <ToolButton className="mr-[10px] size-9 *:justify-center"><Pan /></ToolButton>
        <ToolButton className="mr-[10px] size-9 *:justify-center"><Info /></ToolButton>
        <ToolButton className="mr-[10px] size-9 *:justify-center"><Magnifier arrows /></ToolButton>
        <ToolButton className="mr-[10px] h-[55px] w-[95px] *:gap-[3px] *:pl-[5px]"><Hand /><span>Select</span></ToolButton>
        <ToolButton className="h-[55px] w-[81px] *:gap-[2px] *:pl-[5px]"><Plus /><span>Add</span></ToolButton>
        <ToolButton className="h-[55px] w-[109px] *:gap-[2px] *:pl-[5px]"><Database /><span>Distance</span></ToolButton>
        <ToolButton className="h-[55px] w-[93px] *:gap-[2px] *:pl-[5px]"><Ruler /><span>Query</span></ToolButton>
        <div className={"mr-px flex h-[54px] w-[141px] shrink-0 items-center gap-[2px] self-start pl-[5px] " + OCEAN}><Floppy /><span>Save as Image</span></div>
        <ToolButton className="h-[55px] w-[85px] *:gap-[2px] *:pl-[5px]"><Crop /><span className="tracking-[-0.1px]">Crop</span></ToolButton>
        <ToolButton className="h-[55px] w-[82px] *:gap-[5px] *:pl-[6px]"><Find /><span className="tracking-[-0.3px]">Find</span></ToolButton>
        <ToolButton className="h-[28px] w-[96px] *:justify-center"><span className="whitespace-nowrap">Save as Shape</span></ToolButton>
      </div>
    </div>
  );
}

function LayersPanel() {
  return (
    <div className="flex w-[291px] shrink-0 flex-col border-t border-l border-[#7a8a99] pl-[2px]">
      <div className="mt-[8px] mr-[3px] flex h-[529px] flex-col border border-[#b8cfe5] px-[2px] pb-[2px]">
        <div className="-mt-[8px] self-start bg-[#eee] pr-[2px] pl-[2px] text-[12px] leading-[16px] font-bold tracking-[-0.1px]">Layers</div>
        <div className="mt-[4px] flex min-h-0 flex-1 flex-col bg-white">
          <div className="flex h-[29px] shrink-0 items-center bg-[#b8cfe5] pl-[6px]">
            <Eye />
            <div className="ml-[14px]"><Check /></div>
            <div className="ml-[18px]"><Dots /></div>
            <div className="ml-[13px]"><Stack /></div>
            <span className="ml-[7px] text-[12px] font-bold">usa_counties</span>
          </div>
        </div>
        <div className="flex h-[17px] shrink-0 border border-[#7a8a99] bg-[#eee]">
          <div className="flex w-4 items-center justify-center border-r border-[#7a8a99]">
            <svg width="5" height="8" viewBox="0 0 5 8"><path d="M5 0V8L0 4Z" fill="#222" /></svg>
          </div>
          <div className="flex-1 border-l border-[#b8cfe5]" />
        </div>
      </div>
      <div className="mt-[7px] flex gap-[5px] pl-[3px]">
        <div className={"flex h-[30px] w-[66px] items-center justify-center " + OCEAN}><Eye /></div>
        <div className={"flex h-[30px] w-[66px] items-center justify-center " + OCEAN}><Eye open={false} /></div>
        <div className={"flex h-[30px] w-[66px] items-center justify-center " + OCEAN}><Check /></div>
        <div className={"flex h-[30px] w-[66px] items-center justify-center " + OCEAN}><Cross /></div>
      </div>
    </div>
  );
}

function StatusBar() {
  const box = "mr-[5px] flex h-[29px] shrink-0 items-center justify-center border border-[#999] shadow-[1px_1px_0_#fff,inset_1px_1px_0_#fff] whitespace-nowrap ";
  return (
    <div className="flex h-[37px] shrink-0 items-center bg-[#e0e0e0] pb-[2px] pl-[5px] text-[12px]">
      <div className="mr-[14px] flex h-[26px] w-[50px] items-center justify-center bg-[linear-gradient(#dde8f3,#fff_35%,#b8cfe5)]"><Wrench /></div>
      <svg className="mr-[10px]" width="15" height="15" viewBox="0 0 15 15">
        <circle cx="7.500" cy="7.500" r="5.700" fill="none" stroke="#93e0e0" strokeWidth="2" strokeDasharray="3 .8" />
      </svg>
      <div className={box + "w-[117px] tracking-[0.3px]"}>No cursor</div>
      <div className={box + "w-[203px]"}>x=[-178.22, -66.97] y=[14.98, 75.35]</div>
      <div className={box + "w-[94px]"}>
        <span className="bg-[linear-gradient(#dde8f3,#e8f0f8_35%,#b8cfe5)] tracking-[-0.1px]">EPSG:WGS 84</span>
      </div>
    </div>
  );
}

export default function App() {
  return (
    <div className="relative flex h-[768px] w-[1366px] flex-col overflow-hidden bg-[#eee] font-['Liberation_Sans',sans-serif] text-[#333]">
      <TitleBar />
      <Toolbar />
      <div className="flex h-[590px] shrink-0 flex-col border-t border-[#f8f8f8]">
        <div className="h-[5px] shrink-0 border-t border-[#b8c4d0]" />
        <div className="flex h-[579px] shrink-0">
          <LayersPanel />
          <div className="mx-px w-[7px] bg-[radial-gradient(circle,#8a98a6_0.5px,transparent_0.9px)] bg-[size:4px_4px]" />
          <div className="h-[579px] w-[1065px] border border-[#b5b5b5] border-t-[#7a8a99] border-l-[#7a8a99] bg-white">
            <MapCanvas />
          </div>
        </div>
      </div>
      <StatusBar />
      <Taskbar />
      <SaveDialog />
    </div>
  );
}
